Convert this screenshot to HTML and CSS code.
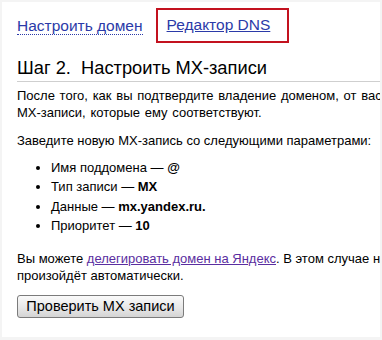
FILE: index.html
```html
<!DOCTYPE html>
<html lang="ru">
<head>
<meta charset="utf-8">
<link rel="stylesheet" href="styles.css">
</head>
<body>
<div class="frame">
  <div class="content">
    <nav class="tabs">
      <a class="tab dotted" href="#">Настроить домен</a>
      <span class="tab-box"><a class="tab" href="#">Редактор DNS</a></span>
    </nav>
    <h2 class="title">Шаг 2.&nbsp; Настроить MX-записи</h2>
    <p class="para wide">После того, как вы подтвердите владение доменом, от вас потребуется создать<br>MX-записи, которые ему соответствуют.</p>
    <p class="para gap">Заведите новую MX-запись со следующими параметрами:</p>
    <ul class="list">
      <li>Имя поддомена — <b>@</b></li>
      <li>Тип записи — <b>MX</b></li>
      <li>Данные — <b>mx.yandex.ru.</b></li>
      <li>Приоритет — <b>10</b></li>
    </ul>
    <p class="para">Вы можете <a class="visited" href="#">делегировать домен на Яндекс</a>. В этом случае настройка MX-записей<br>произойдёт автоматически.</p>
    <button class="btn">Проверить MX записи</button>
  </div>
</div>
</body>
</html>
```
FILE: styles.css
```css
html, body {
  margin: 0;
  padding: 0;
  background: #f4f4f4;
}
body {
  width: 382px;
  height: 340px;
  overflow: hidden;
  font-family: "Liberation Sans", Arial, sans-serif;
  color: #000;
}
.frame {
  margin: 2px 2px 3px 2px;
  height: 335px;
  background: #fff;
  overflow: hidden;
}
.content {
  padding: 6px 0 0 15px;
  width: 480px;
}
.tabs {
  display: flex;
  align-items: center;
  height: 35px;
}
.tab {
  font-size: 15.5px;
  color: #2b3aa8;
  text-decoration: underline;
}
.tab.dotted {
  text-decoration: none;
  border-bottom: 1px dotted #2b3aa8;
  line-height: 17px;
}
.tab-box {
  margin-left: 13px;
  border: 2px solid #c3121f;
  padding: 6px 17px 7px 9px;
}
.title {
  margin: 14px 0 0 0;
  font-size: 18.3px;
  font-weight: normal;
  line-height: 22px;
  padding-bottom: 2px;
  border-bottom: 1px solid #cfcfcf;
}
.para {
  margin: 5px 0 0 0;
  font-size: 13px;
  line-height: 17px;
  white-space: nowrap;
}
.para.wide {
  word-spacing: 1.1px;
}
.para.gap {
  margin-top: 11px;
}
.list {
  margin: 9px 0 14px 0;
  padding-left: 34px;
  font-size: 13px;
  line-height: 19.4px;
}
.visited {
  color: #5a2ea0;
}
.btn {
  margin-top: 11px;
  font-family: "Liberation Sans", Arial, sans-serif;
  font-size: 14.5px;
  height: 23px;
  width: 167px;
  padding: 0;
  border: 1px solid #7b7b7b;
  border-radius: 3px;
  background: linear-gradient(#fafafa, #e8e8e8 55%, #d4d4d4);
  color: #000;
}
```
